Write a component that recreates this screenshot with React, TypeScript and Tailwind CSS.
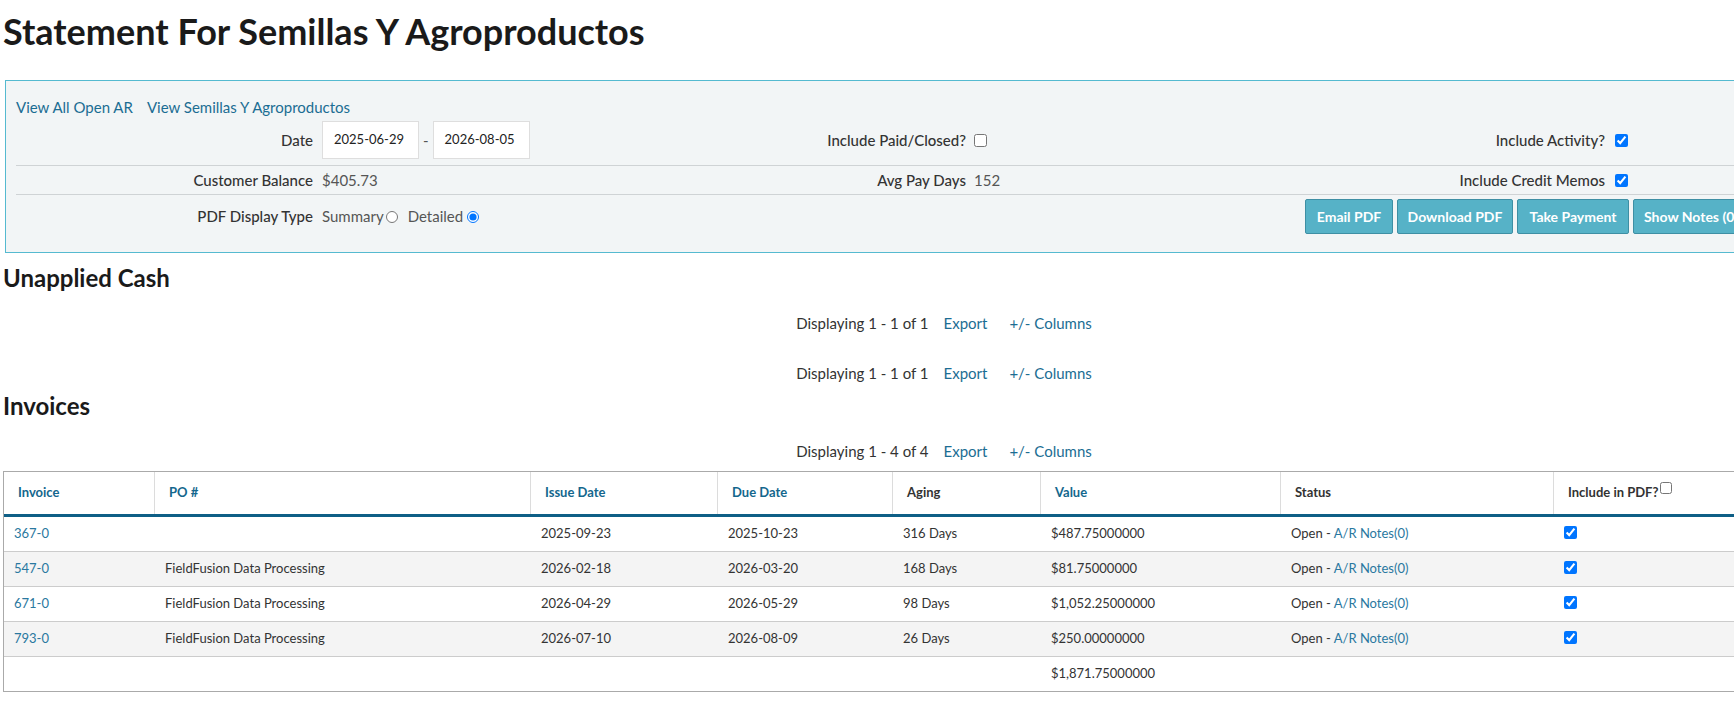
import React from 'react';

// Customer statement page: filter box, unapplied cash pager and invoice grid

const font = "font-['Lato',_'Noto_Sans',_sans-serif]";

type Invoice = {
  id: string;
  po: string;
  issued: string;
  due: string;
  aging: string;
  value: string;
};

const invoices: Invoice[] = [
  { id: '367-0', po: '', issued: '2025-09-23', due: '2025-10-23', aging: '316 Days', value: '$487.75000000' },
  { id: '547-0', po: 'FieldFusion Data Processing', issued: '2026-02-18', due: '2026-03-20', aging: '168 Days', value: '$81.75000000' },
  { id: '671-0', po: 'FieldFusion Data Processing', issued: '2026-04-29', due: '2026-05-29', aging: '98 Days', value: '$1,052.25000000' },
  { id: '793-0', po: 'FieldFusion Data Processing', issued: '2026-07-10', due: '2026-08-09', aging: '26 Days', value: '$250.00000000' },
];

const cols = 'grid grid-cols-[151px_376px_187px_175px_148px_240px_273px_330px]';

function Pager({ text }: { text: string }) {
  return (
    <div className="flex h-[20px] items-center justify-center text-[15px] leading-[20px]">
      <span className="text-[#333]">{text}</span>
      <span className="ml-[15px] text-[#1b6d93]">Export</span>
      <span className="ml-[22px] text-[#1b6d93]">+/- Columns</span>
    </div>
  );
}

function Field({ label, width = 'w-[297px]', children }: { label: string; width?: string; children?: React.ReactNode }) {
  return (
    <div className="flex items-center">
      <div className={`${width} shrink-0 text-right font-medium text-[#333]`}>{label}</div>
      {children}
    </div>
  );
}

function Check({ checked }: { checked?: boolean }) {
  return <input type="checkbox" readOnly checked={!!checked} className="m-0 h-[13px] w-[13px]" />;
}

function HeadCell({ children, link, last }: { children: React.ReactNode; link?: boolean; last?: boolean }) {
  return (
    <div
      className={`flex h-full items-center px-[14px] text-[13px] font-bold ${last ? '' : 'border-r border-[#dcdcdc]'} ${
        link ? 'text-[#14678d]' : 'text-[#333]'
      }`}
    >
      {children}
    </div>
  );
}

const buttons = [
  { label: 'Email PDF', size: 'w-[88px] justify-center' },
  { label: 'Download PDF', size: 'w-[116px] justify-center' },
  { label: 'Take Payment', size: 'w-[112px] justify-center' },
  { label: 'Show Notes (0)', size: 'px-[10px]' },
];

export default function App() {
  return (
    <div className={`w-full overflow-hidden bg-white ${font}`}>
      <div className="w-[1888px] text-[15px] text-[#333]">
        {/* Title */}
        <h1 className="h-[80px] pl-[3px] pt-[11px] text-[36px] font-bold leading-[40px] text-[#1a1a1a]">
          Statement For Semillas Y Agroproductos
        </h1>

        {/* Filter panel */}
        <div className="ml-[5px] mr-[5px] border border-[#55bad0] bg-[#f2f5f6] px-[10px] pb-[13px] pt-[16px]">
          <div className="flex h-[20px] items-center gap-[14px] leading-[20px] text-[#1b6d93]">
            <span>View All Open AR</span>
            <span>View Semillas Y Agroproductos</span>
          </div>

          <div className="grid grid-cols-[653px_636px_1fr] items-center border-b border-[#cfd3d5] pb-[6px] pt-[4px]">
            <Field label="Date">
              <div className="ml-[9px] flex items-center">
                <div className="flex h-[38px] w-[97px] items-center border border-[#dedede] bg-white pl-[11px] text-[13px] text-[#222]">
                  2025-06-29
                </div>
                <span className="mx-[4px] text-[#555]">-</span>
                <div className="flex h-[38px] w-[97px] items-center border border-[#dedede] bg-white pl-[11px] text-[13px] text-[#222]">
                  2026-08-05
                </div>
              </div>
            </Field>
            <Field label="Include Paid/Closed?">
              <span className="ml-[8px] flex">
                <Check />
              </span>
            </Field>
            <Field label="Include Activity?" width="w-[300px]">
              <span className="ml-[10px] flex">
                <Check checked />
              </span>
            </Field>
          </div>

          <div className="grid h-[29px] grid-cols-[653px_636px_1fr] items-center border-b border-[#cfd3d5]">
            <Field label="Customer Balance">
              <span className="ml-[9px] text-[#555]">$405.73</span>
            </Field>
            <Field label="Avg Pay Days">
              <span className="ml-[8px] text-[#555]">152</span>
            </Field>
            <Field label="Include Credit Memos" width="w-[300px]">
              <span className="ml-[10px] flex">
                <Check checked />
              </span>
            </Field>
          </div>

          <div className="grid grid-cols-[653px_636px_1fr] items-center pb-[5px] pt-[4px]">
            <Field label="PDF Display Type">
              <div className="ml-[9px] flex items-center text-[#555]">
                <span>Summary</span>
                <input type="radio" readOnly checked={false} className="m-0 ml-[2px] h-[12px] w-[12px]" />
                <span className="ml-[10px]">Detailed</span>
                <input type="radio" readOnly checked className="m-0 ml-[4px] h-[12px] w-[12px]" />
              </div>
            </Field>
            <div />
            <div className="flex gap-[4px] text-[14px] font-bold text-white">
              {buttons.map((b) => (
                <div
                  key={b.label}
                  className={`flex h-[35px] shrink-0 items-center whitespace-nowrap rounded-[2px] border border-[#3e8fa4] bg-[#56b2c7] ${b.size}`}
                >
                  {b.label}
                </div>
              ))}
            </div>
          </div>
        </div>

        {/* Unapplied cash */}
        <h3 className="mt-[12px] h-[26px] pl-[3px] text-[24px] font-bold leading-[26px] text-[#1a1a1a]">Unapplied Cash</h3>
        <div className="mt-[22px]">
          <Pager text="Displaying 1 - 1 of 1" />
        </div>
        <div className="mt-[30px]">
          <Pager text="Displaying 1 - 1 of 1" />
        </div>

        {/* Invoices */}
        <h3 className="mt-[10px] h-[26px] pl-[3px] text-[24px] font-bold leading-[26px] text-[#1a1a1a]">Invoices</h3>
        <div className="mt-[22px]">
          <Pager text="Displaying 1 - 4 of 4" />
        </div>

        <div className="ml-[3px] mt-[10px] w-[1882px] border border-[#aaaaaa] text-[13px]">
          <div className={`${cols} h-[45px] border-b-[3px] border-[#0e5f86]`}>
            <HeadCell link>Invoice</HeadCell>
            <HeadCell link>PO #</HeadCell>
            <HeadCell link>Issue Date</HeadCell>
            <HeadCell link>Due Date</HeadCell>
            <HeadCell>Aging</HeadCell>
            <HeadCell link>Value</HeadCell>
            <HeadCell>Status</HeadCell>
            <HeadCell last>
              <span className="flex items-start">
                Include in PDF?
                <input type="checkbox" readOnly checked={false} className="m-0 ml-[2px] mt-[-1px] h-[12px] w-[12px]" />
              </span>
            </HeadCell>
          </div>

          {invoices.map((inv, i) => (
            <div
              key={inv.id}
              className={`${cols} h-[35px] items-center border-b border-[#cccccc] text-[#333] ${i % 2 ? 'bg-[#f4f4f4]' : 'bg-white'}`}
            >
              <div className="px-[10px] text-[#2a78a0]">{inv.id}</div>
              <div className="px-[10px]">{inv.po}</div>
              <div className="px-[10px]">{inv.issued}</div>
              <div className="px-[10px]">{inv.due}</div>
              <div className="px-[10px]">{inv.aging}</div>
              <div className="px-[10px]">{inv.value}</div>
              <div className="px-[10px]">
                Open - <span className="text-[#2a78a0]">A/R Notes(0)</span>
              </div>
              <div className="flex self-start px-[10px] pt-[9px]">
                <Check checked />
              </div>
            </div>
          ))}

          <div className={`${cols} h-[34px] items-center bg-white text-[#333]`}>
            <div />
            <div />
            <div />
            <div />
            <div />
            <div className="px-[10px]">$1,871.75000000</div>
            <div />
            <div />
          </div>
        </div>
      </div>
    </div>
  );
}
